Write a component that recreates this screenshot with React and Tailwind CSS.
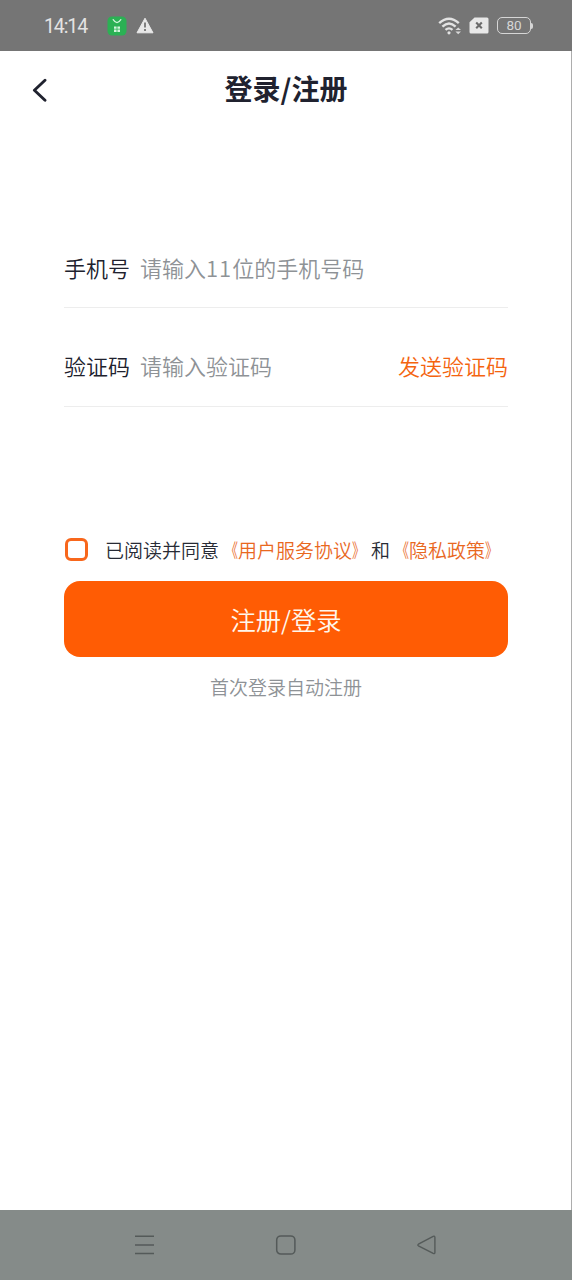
import { useState } from 'react'

const fields = [
  { label: '手机号', placeholder: ['请输入', '11', '位的手机号码'], height: 'h-[79px] pb-[3px]' },
  { label: '验证码', placeholder: ['请输入验证码'], height: 'h-[99px] pt-[16px]', action: '发送验证码' },
]

function StatusBar() {
  return (
    <div className="flex h-[51px] items-center bg-[#757575] pl-11 pr-[39px] font-normal text-[#e3e3e3]">
      <span className="w-[63px] pt-0.5 font-['Roboto'] text-[19.5px] leading-none tracking-[-1.1px]">14:14</span>
      <svg width="20" height="20" viewBox="0 0 20 20" fill="none">
        <rect x="0.5" y="0.5" width="19" height="19" rx="4.5" fill="#2bb154" />
        <path d="M6.2 3.6 Q10 9.6 13.8 3.6" stroke="#d3f5dc" strokeWidth="1.2" strokeLinecap="round" />
        <path d="M7 10.4h2.6v2.4H7zM10.4 10.4H13v2.4h-2.6zM7 13.5h2.6v2.4H7zM10.4 13.5H13v2.4h-2.6z" fill="#d3f5dc" />
      </svg>
      <svg className="ml-[9px]" width="18" height="17" viewBox="0 0 18 17">
        <path d="M9 1.2 L17 15.8 H1 Z" fill="#e8e8e8" stroke="#e8e8e8" strokeLinejoin="round" />
        <path d="M9 5.5v5M9 12v2" stroke="#757575" strokeWidth="1.8" />
      </svg>

      <div className="ml-auto flex items-center">
        <svg width="24" height="18" viewBox="0 0 24 18" fill="none" stroke="#e3e3e3">
          <path d="M1.2 6.2 Q11 -2.9 20.8 6.2" strokeWidth="2.4" />
          <path d="M4.4 9.7 Q11 3.4 17.6 9.7" strokeWidth="2.4" />
          <path d="M7.5 12.9 Q11 9.8 14.5 12.9" strokeWidth="2.3" />
          <circle cx="11" cy="15.8" r="1.6" fill="#e3e3e3" stroke="none" />
          <path d="M17.4 13 L20.2 10.4 L23 13 Z M17.4 14.6 L20.2 17.2 L23 14.6 Z" fill="#d8d8d8" stroke="none" />
        </svg>
        <svg className="ml-[7px]" width="20" height="17" viewBox="0 0 20 17">
          <path d="M5.5 0.5 H18 Q19.5 0.5 19.5 2 V15 Q19.5 16.5 18 16.5 H2 Q0.5 16.5 0.5 15 V5.2 Z" fill="#e8e8e8" />
          <path d="M7.2 5.6 L12.8 11.2 M12.8 5.6 L7.2 11.2" stroke="#6b6b6b" strokeWidth="2.1" />
        </svg>
        <div className="ml-2 flex items-center">
          <span className="flex h-[17px] w-[34px] items-center justify-center rounded-[5px] border-[1.5px] border-[#d6d6d6] font-['Roboto'] text-[13.5px] leading-none text-[#d6d6d6]">
            80
          </span>
          <span className="h-[6px] w-[2px] rounded-r bg-[#d6d6d6]" />
        </div>
      </div>
    </div>
  )
}

function Field({ label, placeholder, height, action }) {
  const [before, digits, after] = placeholder
  return (
    <div className={`flex items-center border-b border-[#ededed] text-[22px] leading-8 ${height}`}>
      <span className="w-[76px] text-[#20212d]">{label}</span>
      <span className="text-[#8e9296]">
        {before}
        {digits && <span className="tracking-[1px]">{digits}</span>}
        {after}
      </span>
      {action && <button className="ml-auto text-[#f4640f]">{action}</button>}
    </div>
  )
}

// Document link with narrow title brackets hugging the name
function DocLink({ children }) {
  return (
    <span className="flex text-[#e9681f]">
      <span className="w-[19px] origin-right scale-x-[0.67]">《</span>
      <span>{children}</span>
      <span className="w-[19px] origin-left scale-x-[0.67]">》</span>
    </span>
  )
}

function NavBar() {
  return (
    <div className="flex h-[70px] items-center justify-between bg-[#858b89] pl-[134px] pr-[135px]">
      <svg width="21" height="22" viewBox="0 0 21 22" stroke="#545a59" strokeWidth="1.5">
        <path d="M1 2.2h19M1 11h19M1 19.6h19" />
      </svg>
      <svg width="21" height="22" viewBox="0 0 21 22" fill="none" stroke="#545a59" strokeWidth="1.5">
        <rect x="1.7" y="1.9" width="18.2" height="18.2" rx="4.2" />
      </svg>
      <svg width="21" height="22" viewBox="0 0 21 22" fill="none" stroke="#545a59" strokeWidth="1.4" strokeLinejoin="round">
        <path d="M2.4 10.2 L17.2 2.3 Q18.9 1.7 18.9 3.4 V18.4 Q18.9 20.1 17.2 19.4 L2.4 11.8 Q1.3 11 2.4 10.2 Z" />
      </svg>
    </div>
  )
}

export default function App() {
  const [agreed, setAgreed] = useState(false)

  return (
    <div className="flex h-[1280px] w-[572px] flex-col bg-white font-['Noto_Sans_CJK_SC',sans-serif] font-[350]">
      <StatusBar />

      <div className="flex flex-1 flex-col border-r border-[#adadad]">
        <header className="grid h-[78px] grid-cols-[64px_1fr_63px] items-center">
          <button className="ml-8">
            <svg width="16" height="24" viewBox="0 0 16 24" fill="none" stroke="#20222f" strokeWidth="2.9" strokeLinecap="round" strokeLinejoin="round">
              <path d="M13 2.2 L2.4 12.2 L13 22.2" />
            </svg>
          </button>
          <h1 className="pb-[4px] text-center text-[28px] font-bold leading-10 text-[#20222f]">登录/注册</h1>
        </header>

        <main className="flex flex-col pl-16 pr-[63px] pt-[100px]">
          {fields.map(f => <Field key={f.label} {...f} />)}

          <div className="mt-[128px] flex h-[29px] items-center whitespace-nowrap text-[19px] leading-7 text-[#282b35]">
            <button
              className={`ml-px mr-[17px] h-[23px] w-[23px] shrink-0 rounded-[6px] border-[3px] border-[#f8671c] ${agreed ? 'bg-[#f8671c]' : 'bg-white'}`}
              onClick={() => setAgreed(!agreed)}
            />
            <span>已阅读并同意</span>
            <DocLink>用户服务协议</DocLink>
            <span>和</span>
            <DocLink>隐私政策</DocLink>
          </div>

          <button className="mt-[17px] h-[76px] rounded-[16px] bg-[#ff5c04] pt-px text-[25.3px] text-[#fff7ec]">注册/登录</button>
          <p className="mt-4 text-center text-[19px] leading-7 text-[#8e9296]">首次登录自动注册</p>
        </main>
      </div>

      <NavBar />
    </div>
  )
}
